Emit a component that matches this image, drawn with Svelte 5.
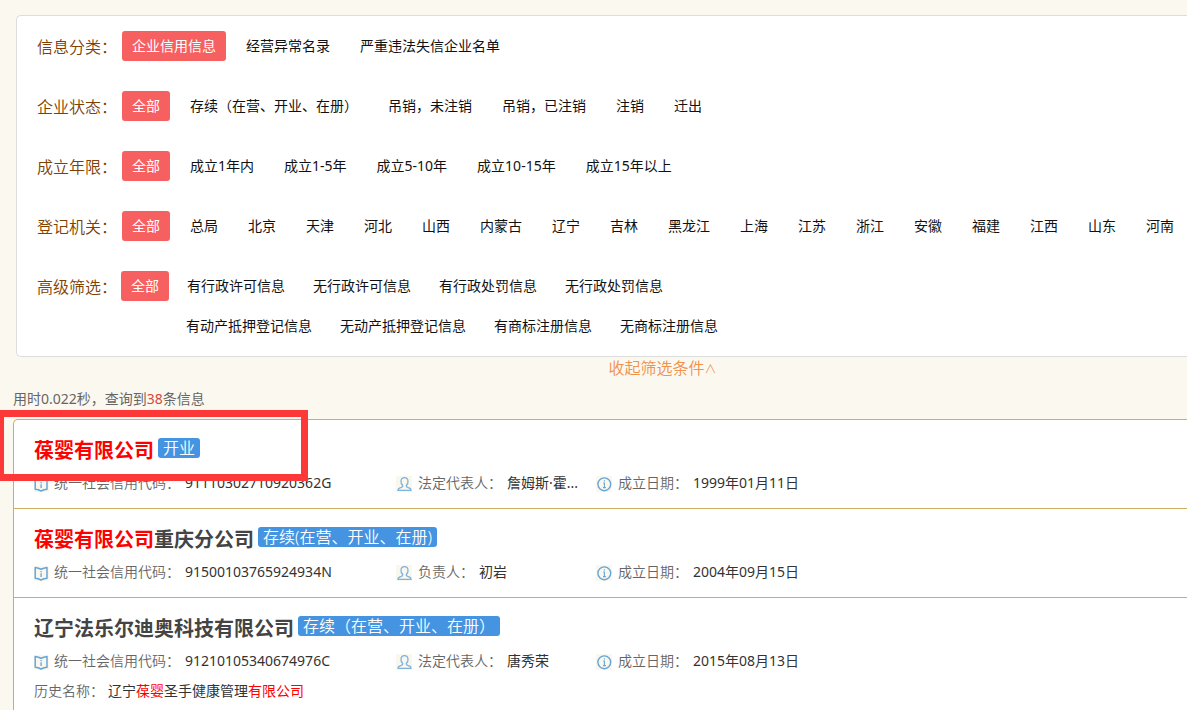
<script>
  const filters = [
    { label: '信息分类', lines: [['企业信用信息', '经营异常名录', '严重违法失信企业名单']] },
    { label: '企业状态', lines: [['全部', '存续（在营、开业、在册）', '吊销，未注销', '吊销，已注销', '注销', '迁出']] },
    { label: '成立年限', lines: [['全部', '成立1年内', '成立1-5年', '成立5-10年', '成立10-15年', '成立15年以上']] },
    {
      label: '登记机关',
      lines: [['全部', '总局', '北京', '天津', '河北', '山西', '内蒙古', '辽宁', '吉林', '黑龙江', '上海', '江苏', '浙江', '安徽', '福建', '江西', '山东', '河南']]
    },
    {
      label: '高级筛选',
      compact: true,
      lines: [
        ['全部', '有行政许可信息', '无行政许可信息', '有行政处罚信息', '无行政处罚信息'],
        ['有动产抵押登记信息', '无动产抵押登记信息', '有商标注册信息', '无商标注册信息']
      ]
    }
  ];

  // hit: true marks the part of a name that matched the query
  const companies = [
    {
      name: [{ text: '葆婴有限公司', hit: true }],
      status: '开业',
      code: '91110302710920362G',
      role: '法定代表人',
      person: '詹姆斯·霍...',
      date: '1999年01月11日',
      marked: true
    },
    {
      name: [{ text: '葆婴有限公司', hit: true }, { text: '重庆分公司' }],
      status: '存续(在营、开业、在册)',
      code: '91500103765924934N',
      role: '负责人',
      person: '初岩',
      date: '2004年09月15日'
    },
    {
      name: [{ text: '辽宁法乐尔迪奥科技有限公司' }],
      status: '存续（在营、开业、在册）',
      code: '91210105340674976C',
      role: '法定代表人',
      person: '唐秀荣',
      date: '2015年08月13日',
      history: [
        { text: '辽宁' },
        { text: '葆婴', hit: true },
        { text: '圣手健康管理' },
        { text: '有限公司', hit: true }
      ]
    }
  ];

  let selected = $state(filters.map((f) => f.lines[0][0]));
  let open = $state(true);
</script>

{#snippet parts(list)}
  {#each list as p}<span class:hit={p.hit}>{p.text}</span>{/each}
{/snippet}

<main>
  {#if open}
    <section class="filters">
      {#each filters as f, i}
        <div class="filter" class:compact={f.compact} role="group" aria-labelledby="filter-{i}">
          <span class="filter-label" id="filter-{i}">{f.label}：</span>
          <div class="lines">
            {#each f.lines as line, n}
              <div class="line" class:indent={n > 0}>
                {#each line as option}
                  <button
                    class="option"
                    class:active={selected[i] === option}
                    onclick={() => (selected[i] = option)}
                  >{option}</button>
                {/each}
              </div>
            {/each}
          </div>
        </div>
      {/each}
    </section>
  {/if}

  <div class="toggle-row">
    <button class="toggle" onclick={() => (open = !open)}>
      {open ? '收起' : '展开'}筛选条件<span class="caret">{open ? '∧' : '∨'}</span>
    </button>
  </div>

  <p class="summary">用时0.022秒，查询到<em>38</em>条信息</p>

  <ul class="results">
    {#each companies as c}
      <li class="company">
        {#if c.marked}<div class="marker"></div>{/if}
        <h2>
          <a href="#detail">{@render parts(c.name)}</a>
          <span class="status">{c.status}</span>
        </h2>
        <div class="meta">
          <div class="field code">
            <svg class="icon" width="15" height="15" viewBox="0 0 15 15">
              <rect width="15" height="15" fill="#f9f7ee" />
              <path d="M1.2 1.6L4.4 2.2L7 3.3L9.8 2.2L13 1.6V12.2L10 12.8L7 14L4.2 12.8L1.2 12.2Z" fill="none" stroke="#65a6d8" stroke-width="1.5" stroke-linejoin="round" />
              <path d="M7.1 5V6.2M7.1 7.2V11" stroke="#65a6d8" stroke-width="1.3" />
            </svg>
            <span class="key">统一社会信用代码：</span>
            <span class="value">{c.code}</span>
          </div>
          <div class="field person">
            <svg class="icon" width="16" height="16" viewBox="0 0 16 16">
              <rect width="16" height="16" fill="#f9f7ee" />
              <path d="M6.7 9.4C4.4 7.8 3.9 1.7 8.5 1.7S12.6 7.8 10.3 9.4C10 11.2 11.2 11.4 13 11.9C14.4 12.3 15 13 15 14.3H2C2 13 2.6 12.3 4 11.9C5.8 11.4 7 11.2 6.7 9.4Z" fill="none" stroke="#7fb2dc" stroke-width="1.3" />
            </svg>
            <span class="key">{c.role}：</span>
            <span class="value">{c.person}</span>
          </div>
          <div class="field">
            <svg class="icon" width="16" height="16" viewBox="0 0 16 16">
              <rect width="16" height="16" fill="#f9f7ee" />
              <circle cx="8.3" cy="8.3" r="6.4" fill="none" stroke="#65a6d8" stroke-width="1.4" />
              <path d="M8.4 4.2V5.6M7.2 7H8.4V11.6M7 11.6H9.9" fill="none" stroke="#65a6d8" stroke-width="1.1" />
            </svg>
            <span class="key">成立日期：</span>
            <span class="value">{c.date}</span>
          </div>
        </div>
        {#if c.history}
          <div class="history">
            <span class="key">历史名称：</span>
            <span class="value">{@render parts(c.history)}</span>
          </div>
        {/if}
      </li>
    {/each}
  </ul>
</main>

<style>
  :global(body) {
    background: #fbf8f0;
    overflow: hidden;
  }

  main {
    padding-top: 15px;
    font-family: 'Noto Sans', 'Noto Sans CJK SC', sans-serif;
    font-size: 14px;
    color: #333;
    white-space: nowrap;
  }
  button {
    border: 0;
    background: none;
    font: inherit;
    cursor: pointer;
  }

  /* Filters */
  .filters {
    display: flex;
    flex-direction: column;
    gap: 30px;
    margin-left: 16px;
    padding: 15px 0 15px 20px;
    background: #fff;
    border: 1px solid #ddd;
    border-right: 0;
    border-radius: 5px 0 0 5px;
  }
  .filter {
    display: flex;
    gap: 5px;
  }
  .filter.compact {
    gap: 4px;
  }
  .filter-label {
    flex: none;
    font-size: 16px;
    font-weight: 350;
    line-height: 32px;
    height: 30px;
    color: #804000;
  }
  .lines {
    display: flex;
    flex-direction: column;
    gap: 10px;
  }
  .line {
    display: flex;
    gap: 10px;
  }
  .compact .line {
    gap: 8px;
  }
  .line.indent {
    padding-left: 55px;
  }
  .option {
    height: 30px;
    padding: 0 10px;
    border-radius: 3px;
    line-height: 30px;
    color: #111;
  }
  .option.active {
    background: #f66060;
    color: #fff;
  }

  .toggle-row {
    display: flex;
    justify-content: center;
    padding-left: 138px;
  }
  .toggle {
    padding: 0;
    font-size: 16px;
    font-weight: 350;
    line-height: 22px;
    color: #f0914c;
  }
  .caret {
    font-size: 12px;
  }

  .summary {
    margin: 6px 0 8px 13px;
    line-height: 24px;
    color: #666;
  }
  .summary em {
    font-style: normal;
    color: #d9463e;
  }

  /* Results */
  .results {
    margin: 0 0 0 13px;
    padding: 0;
    list-style: none;
    background: #fff;
    border: 1px solid #cfae62;
    border-right: 0;
    border-radius: 5px 0 0 5px;
  }
  .company {
    position: relative;
    padding: 16px 20px 10px;
  }
  .company + .company {
    border-top: 1px solid #cfae62;
  }
  h2 {
    display: flex;
    align-items: flex-start;
    gap: 4px;
    margin: 0 0 2px;
    font-size: 20px;
    line-height: 30px;
  }
  h2 a {
    color: #444;
    text-decoration: none;
  }
  .hit {
    color: #f00;
  }
  .status {
    margin-top: 2px;
    padding: 0 5px;
    border-radius: 3px;
    background: #4494e2;
    color: #fff;
    font-size: 16px;
    font-weight: 350;
    line-height: 20px;
  }
  .meta,
  .history {
    display: flex;
    line-height: 30px;
  }
  .history {
    gap: 4px;
  }
  .field {
    display: flex;
    align-items: center;
    gap: 5px;
  }
  .field.code {
    width: 362px;
  }
  .field.person {
    width: 200px;
  }
  .icon {
    flex: none;
    margin-top: 2px;
  }
  .field:not(.code) .icon {
    margin-right: 1px;
  }
  .key {
    font-weight: 350;
    color: #666;
  }

  .marker {
    position: absolute;
    top: -10px;
    left: -17px;
    width: 297px;
    height: 57px;
    border: 7px solid #fd3838;
  }
</style>
